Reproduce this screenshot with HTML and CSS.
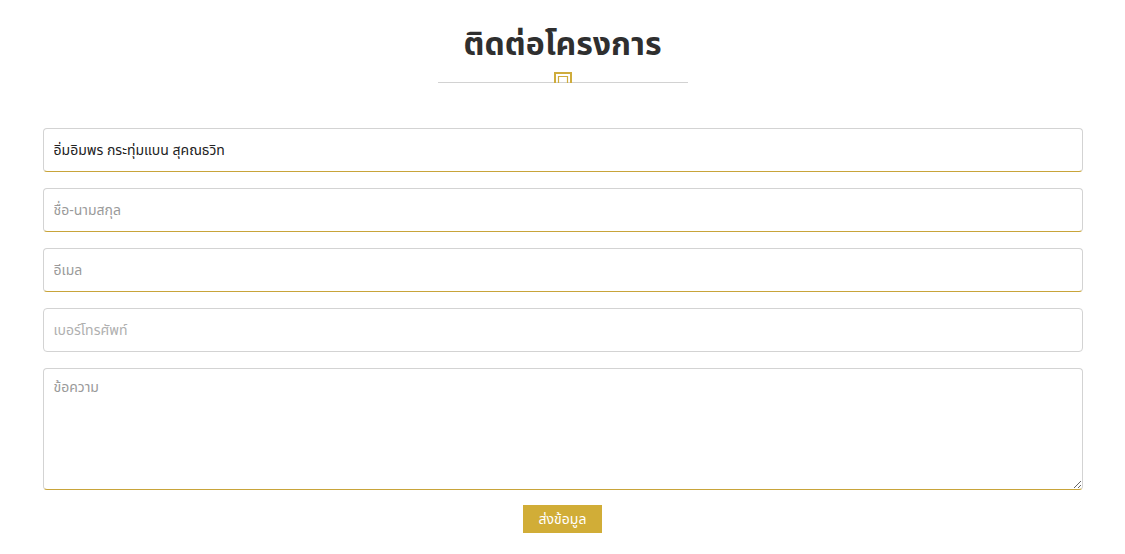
FILE: index.html
```html
<!DOCTYPE html>
<html lang="th">
<head>
<meta charset="utf-8">
<title>ติดต่อโครงการ</title>
<link rel="stylesheet" href="styles.css">
</head>
<body>
<section class="contact">
  <header class="heading">
    <h1 class="title">ติดต่อโครงการ</h1>
    <div class="divider">
      <svg class="divider-icon" width="18" height="11" viewBox="0 0 18 11">
        <path d="M1 11 V1 H17 V11" fill="none" stroke="#cfac3c" stroke-width="2"/>
        <path d="M4.5 11 V4.5 H13.5 V11" fill="none" stroke="#cfac3c" stroke-width="1.2"/>
      </svg>
    </div>
  </header>
  <form class="form">
    <input class="field filled" type="text" value="อิ่มอิมพร กระทุ่มแบน สุคณธวิท">
    <input class="field" type="text" placeholder="ชื่อ-นามสกุล">
    <input class="field" type="email" placeholder="อีเมล">
    <input class="field plain" type="tel" placeholder="เบอร์โทรศัพท์">
    <textarea class="field area" placeholder="ข้อความ"></textarea>
    <div class="actions">
      <button class="submit" type="button">ส่งข้อมูล</button>
    </div>
  </form>
</section>
</body>
</html>
```

FILE: styles.css
```css
* { box-sizing: border-box; }
body {
  margin: 0;
  background: #fff;
  font-family: "Noto Sans Thai", "Noto Sans Thai UI", "Noto Sans", "DejaVu Sans", sans-serif;
  color: #222;
}
.contact {
  width: 1040px;
  margin: 0 auto;
  padding-top: 23px;
}
.heading {
  display: flex;
  flex-direction: column;
  align-items: center;
}
.title {
  margin: 0;
  font-size: 32px;
  font-weight: 700;
  color: #2f2f2f;
  line-height: 44px;
}
.divider {
  position: relative;
  width: 250px;
  height: 1px;
  background: #d2d2d2;
  margin-top: 15px;
}
.divider-icon {
  position: absolute;
  left: 116px;
  top: -10px;
  display: block;
}
.form {
  display: flex;
  flex-direction: column;
  gap: 16px;
  margin-top: 45px;
}
.field {
  display: block;
  width: 100%;
  height: 44px;
  border: 1px solid #d3d3d3;
  border-bottom: 1px solid #c8a43a;
  border-radius: 4px;
  padding: 0 10px;
  font-family: inherit;
  font-size: 14px;
  color: #222;
  background: #fff;
  outline: none;
}
.field::placeholder { color: #9a9a9a; }
.field.plain { border-bottom-color: #d3d3d3; }
.field.plain::placeholder { color: #b0b0b0; }
.area {
  height: 122px;
  padding: 8px 10px;
  resize: vertical;
}
.actions {
  display: flex;
  justify-content: center;
  margin-top: -1px;
}
.submit {
  width: 79px;
  height: 28px;
  border: 0;
  border-radius: 0;
  background: #d1ad37;
  color: #fff;
  font-family: inherit;
  font-size: 14px;
  padding: 0;
  box-shadow: 0 1px 0 #fff, 0 3px 0 #d1ad37;
  cursor: pointer;
}
```
